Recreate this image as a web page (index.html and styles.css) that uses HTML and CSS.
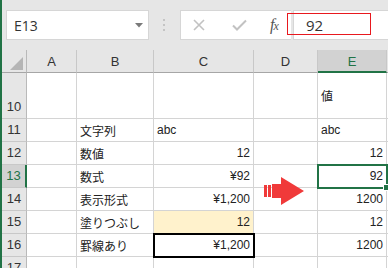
FILE: index.html
```html
<!DOCTYPE html>
<html lang="ja">
<head>
<meta charset="utf-8">
<link rel="stylesheet" href="styles.css">
</head>
<body>
<div class="app">
  <div class="toolbar">
    <div class="namebox">
      <span class="nb-text">E13</span>
      <svg class="dd" width="8" height="5" viewBox="0 0 8 5"><path d="M0 0H8L4 4.5Z" fill="#7a7a7a"/></svg>
    </div>
    <div class="grip">
      <svg width="3" height="12" viewBox="0 0 3 12"><rect x="0" y="0" width="2" height="2" fill="#c4c4c4"/><rect x="0" y="5" width="2" height="2" fill="#c4c4c4"/><rect x="0" y="10" width="2" height="2" fill="#c4c4c4"/></svg>
    </div>
    <div class="fbtns">
      <svg class="ic" width="12" height="12" viewBox="0 0 12 12"><path d="M1 1L11 11M11 1L1 11" stroke="#c2c2c2" stroke-width="1.6" fill="none"/></svg>
      <svg class="ic" width="15" height="12" viewBox="0 0 15 12"><path d="M1 6.5L5 10.5L14 1.5" stroke="#c2c2c2" stroke-width="2" fill="none"/></svg>
      <span class="fx">f<span class="fx-x">x</span></span>
    </div>
    <div class="finput"><span class="fval">92</span></div>
    <div class="redbox"></div>
  </div>

  <div class="sheet">
    <div class="corner"><svg width="13" height="13" viewBox="0 0 13 13"><path d="M13 0V13H0Z" fill="#b5b5b5"/></svg></div>
    <div class="ch">A</div>
    <div class="ch">B</div>
    <div class="ch">C</div>
    <div class="ch">D</div>
    <div class="ch ch-sel">E</div>
    <div class="ch ch-last"></div>

    <div class="rh">10</div>
    <div class="c"></div>
    <div class="c"></div>
    <div class="c"></div>
    <div class="c"></div>
    <div class="c">値</div>
    <div class="c c-last"></div>

    <div class="rh">11</div>
    <div class="c"></div>
    <div class="c">文字列</div>
    <div class="c">abc</div>
    <div class="c"></div>
    <div class="c">abc</div>
    <div class="c c-last"></div>

    <div class="rh">12</div>
    <div class="c"></div>
    <div class="c">数値</div>
    <div class="c num">12</div>
    <div class="c"></div>
    <div class="c num">12</div>
    <div class="c c-last"></div>

    <div class="rh rh-sel">13</div>
    <div class="c"></div>
    <div class="c">数式</div>
    <div class="c num">¥92</div>
    <div class="c"></div>
    <div class="c num active">92<span class="handle"></span></div>
    <div class="c c-last"></div>

    <div class="rh">14</div>
    <div class="c"></div>
    <div class="c">表示形式</div>
    <div class="c num">¥1,200</div>
    <div class="c"></div>
    <div class="c num">1200</div>
    <div class="c c-last"></div>

    <div class="rh">15</div>
    <div class="c"></div>
    <div class="c">塗りつぶし</div>
    <div class="c num fill">12</div>
    <div class="c"></div>
    <div class="c num">12</div>
    <div class="c c-last"></div>

    <div class="rh">16</div>
    <div class="c"></div>
    <div class="c">罫線あり</div>
    <div class="c num boxed">¥1,200</div>
    <div class="c"></div>
    <div class="c num">1200</div>
    <div class="c c-last"></div>

    <div class="rh">17</div>
    <div class="c"></div>
    <div class="c"></div>
    <div class="c"></div>
    <div class="c"></div>
    <div class="c"></div>
    <div class="c c-last"></div>

    <svg class="arrow" width="44" height="30" viewBox="0 0 44 30">
      <rect x="0" y="9" width="3" height="12" fill="#f03a3a"/>
      <rect x="4" y="9" width="3" height="12" fill="#f03a3a"/>
      <path d="M8 8H17V1L40 15L17 29V22H8Z" fill="#f03a3a"/>
    </svg>
  </div>
</div>
</body>
</html>
```

FILE: styles.css
```css
html, body {
  margin: 0;
  padding: 0;
}
body {
  width: 388px;
  height: 268px;
  overflow: hidden;
  background: #e6e6e6;
}
.app {
  border-left: 2px solid #217346;
  height: 268px;
  overflow: hidden;
  background: #e6e6e6;
}
.toolbar {
  position: relative;
  height: 50px;
  box-sizing: border-box;
  padding-top: 10px;
  display: flex;
  align-items: flex-start;
}
.namebox {
  margin-left: 4px;
  width: 143px;
  height: 30px;
  box-sizing: border-box;
  background: #fff;
  border: 1px solid #d6d6d6;
  display: flex;
  align-items: center;
  justify-content: space-between;
  padding: 0 5px 0 7px;
  font-family: "Open Sans", "Liberation Sans", sans-serif;
  font-size: 14px;
  color: #333;
}
.dd {
  margin-top: 1px;
}
.grip {
  width: 31px;
  height: 30px;
  display: flex;
  align-items: center;
  justify-content: center;
}
.fbtns {
  width: 111px;
  height: 30px;
  box-sizing: border-box;
  background: #fff;
  border: 1px solid #d6d6d6;
  border-right: none;
  display: flex;
  align-items: center;
  padding-left: 12px;
  gap: 0;
}
.fbtns .ic:first-child {
  margin-right: 27px;
}
.fbtns .ic:nth-child(2) {
  margin-right: 23px;
}
.fx {
  font-family: "Liberation Serif", serif;
  font-style: italic;
  font-size: 16px;
  color: #555;
  letter-spacing: -1px;
}
.fx-x {
  font-size: 12px;
}
.finput {
  flex: 1;
  height: 30px;
  box-sizing: border-box;
  margin-left: 2px;
  background: #fff;
  border: 1px solid #d6d6d6;
  border-right: none;
  display: flex;
  align-items: center;
  padding-left: 12px;
  font-family: "Open Sans", "Liberation Sans", sans-serif;
  font-size: 15px;
  color: #333;
}
.redbox {
  position: absolute;
  left: 285px;
  top: 13px;
  width: 82px;
  height: 20px;
  border: 1px solid #e8181e;
}

.sheet {
  position: relative;
  display: grid;
  grid-template-columns: 25px 50px 77px 100px 64px 69px 1fr;
  grid-template-rows: 23px 46px repeat(7, 23px);
  font-family: "Liberation Sans", "Noto Sans CJK JP", sans-serif;
  font-size: 12px;
  color: #222;
}
.corner {
  box-sizing: border-box;
  border-right: 1px solid #b9b9b9;
  border-bottom: 1px solid #a6a6a6;
  display: flex;
  align-items: flex-end;
  justify-content: flex-end;
  padding: 0 3px 2px 0;
}
.ch {
  box-sizing: border-box;
  border-right: 1px solid #c8c8c8;
  border-bottom: 1px solid #a6a6a6;
  display: flex;
  align-items: center;
  justify-content: center;
  font-size: 13px;
  color: #333;
  padding-top: 1px;
}
.ch-sel {
  background: #d2d2d2;
  color: #217346;
  border-bottom: 2px solid #217346;
}
.ch-last {
  border-right: none;
}
.rh {
  box-sizing: border-box;
  border-right: 1px solid #b9b9b9;
  border-bottom: 1px solid #c8c8c8;
  display: flex;
  align-items: flex-end;
  justify-content: center;
  padding-bottom: 4px;
  font-size: 13px;
  color: #333;
}
.rh-sel {
  background: #d2d2d2;
  color: #217346;
  border-right: 2px solid #217346;
}
.c {
  position: relative;
  box-sizing: border-box;
  background: #fff;
  border-right: 1px solid #d4d4d4;
  border-bottom: 1px solid #d4d4d4;
  display: flex;
  align-items: center;
  padding: 0 3px 0 3px;
  white-space: nowrap;
}
.c-last {
  border-right: none;
}
.num {
  justify-content: flex-end;
}
.fill {
  background: #fff2cc;
}
.boxed {
  outline: 2px solid #000;
  outline-offset: -1px;
  z-index: 1;
}
.active {
  outline: 2px solid #217346;
  outline-offset: -1px;
  z-index: 2;
}
.handle {
  position: absolute;
  right: -4px;
  bottom: -4px;
  width: 5px;
  height: 5px;
  background: #217346;
  border: 1px solid #fff;
}
.arrow {
  position: absolute;
  left: 262px;
  top: 126px;
  z-index: 3;
}
```
